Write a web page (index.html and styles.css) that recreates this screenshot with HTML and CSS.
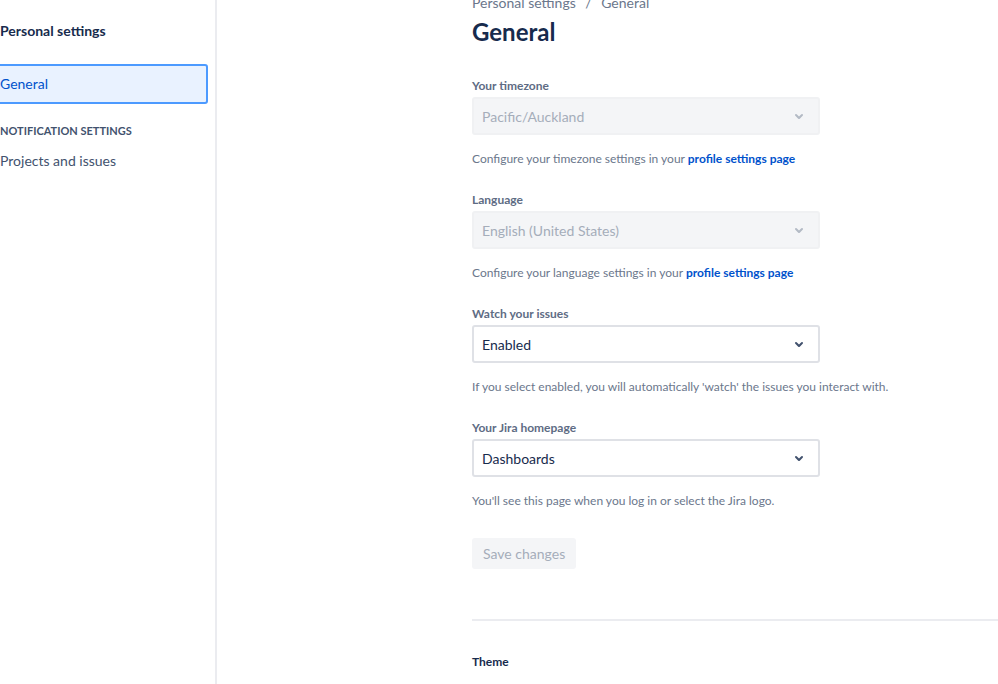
FILE: index.html
```html
<!DOCTYPE html>
<html lang="en">
<head>
  <meta charset="UTF-8">
  <meta name="viewport" content="width=device-width, initial-scale=1.0">
  <title>Personal settings - General</title>
  <link rel="stylesheet" href="styles.css">
</head>
<body>
  <div class="layout">
    <nav class="sidebar">
      <div class="sidebar-title">Personal settings</div>
      <a class="nav-item active" href="#">General</a>
      <div class="nav-heading">NOTIFICATION SETTINGS</div>
      <a class="nav-item" href="#">Projects and issues</a>
    </nav>

    <main class="main">
      <div class="breadcrumbs">Personal settings <span class="sep">/</span> General</div>
      <h1 class="page-title">General</h1>

      <div class="field">
        <label class="field-label">Your timezone</label>
        <div class="select disabled">
          <span>Pacific/Auckland</span>
          <svg class="chevron" width="24" height="24" viewBox="0 0 24 24"><path d="M8.292 10.293a1.009 1.009 0 000 1.419l2.939 2.965c.218.215.5.322.779.322s.556-.107.769-.322l2.93-2.955a1.01 1.01 0 000-1.419.987.987 0 00-1.406 0l-2.298 2.317-2.307-2.327a.99.99 0 00-1.406 0z" fill="currentColor"/></svg>
        </div>
        <div class="helper">Configure your timezone settings in your <a href="#">profile settings page</a></div>
      </div>

      <div class="field">
        <label class="field-label">Language</label>
        <div class="select disabled">
          <span>English (United States)</span>
          <svg class="chevron" width="24" height="24" viewBox="0 0 24 24"><path d="M8.292 10.293a1.009 1.009 0 000 1.419l2.939 2.965c.218.215.5.322.779.322s.556-.107.769-.322l2.93-2.955a1.01 1.01 0 000-1.419.987.987 0 00-1.406 0l-2.298 2.317-2.307-2.327a.99.99 0 00-1.406 0z" fill="currentColor"/></svg>
        </div>
        <div class="helper">Configure your language settings in your <a href="#">profile settings page</a></div>
      </div>

      <div class="field">
        <label class="field-label">Watch your issues</label>
        <div class="select">
          <span>Enabled</span>
          <svg class="chevron" width="24" height="24" viewBox="0 0 24 24"><path d="M8.292 10.293a1.009 1.009 0 000 1.419l2.939 2.965c.218.215.5.322.779.322s.556-.107.769-.322l2.93-2.955a1.01 1.01 0 000-1.419.987.987 0 00-1.406 0l-2.298 2.317-2.307-2.327a.99.99 0 00-1.406 0z" fill="currentColor"/></svg>
        </div>
        <div class="helper">If you select enabled, you will automatically 'watch' the issues you interact with.</div>
      </div>

      <div class="field">
        <label class="field-label">Your Jira homepage</label>
        <div class="select">
          <span>Dashboards</span>
          <svg class="chevron" width="24" height="24" viewBox="0 0 24 24"><path d="M8.292 10.293a1.009 1.009 0 000 1.419l2.939 2.965c.218.215.5.322.779.322s.556-.107.769-.322l2.93-2.955a1.01 1.01 0 000-1.419.987.987 0 00-1.406 0l-2.298 2.317-2.307-2.327a.99.99 0 00-1.406 0z" fill="currentColor"/></svg>
        </div>
        <div class="helper">You'll see this page when you log in or select the Jira logo.</div>
      </div>

      <button class="save-btn" disabled>Save changes</button>

      <hr class="divider">

      <div class="section-title">Theme</div>
    </main>
  </div>
</body>
</html>
```

FILE: styles.css
```css
body {
  margin: 0;
  padding: 0;
  font-family: Lato, "Noto Sans", sans-serif;
  color: #172b4d;
  background: #fff;
  overflow: hidden;
}

.layout {
  display: flex;
  height: 684px;
}

.sidebar {
  width: 215px;
  flex-shrink: 0;
  border-right: 2px solid #ebecf0;
  padding-top: 21px;
}

.sidebar-title {
  font-size: 14px;
  font-weight: 700;
  line-height: 20px;
  color: #172b4d;
  margin-bottom: 23px;
}

.nav-item {
  display: block;
  font-size: 14px;
  line-height: 20px;
  color: #42526e;
  text-decoration: none;
  padding: 8px 8px;
  margin-left: -10px;
  width: 198px;
  border: 2px solid transparent;
  border-radius: 3px;
}

.nav-item.active {
  background: #e9f2ff;
  border-color: #4c9aff;
  color: #0052cc;
}

.nav-heading {
  font-size: 11px;
  font-weight: 700;
  line-height: 16px;
  color: #42526e;
  margin-top: 19px;
  margin-bottom: 2px;
}

.main {
  flex: 1;
  padding-left: 255px;
  margin-top: -7px;
}

.breadcrumbs {
  font-size: 14px;
  line-height: 20px;
  color: #6b778c;
}

.breadcrumbs .sep {
  margin: 0 6px;
}

.page-title {
  font-size: 24px;
  font-weight: 700;
  line-height: 28px;
  margin: 5px 0 0;
  color: #172b4d;
}

.field {
  width: 348px;
  margin-top: 25px;
}

.page-title + .field {
  margin-top: 32px;
}

.field-label {
  display: block;
  font-size: 12px;
  font-weight: 700;
  line-height: 16px;
  color: #5e6c84;
  margin-bottom: 3px;
}

.select {
  display: flex;
  align-items: center;
  justify-content: space-between;
  height: 38px;
  box-sizing: border-box;
  padding: 0 7px 0 8px;
  border: 2px solid #dfe1e6;
  border-radius: 3px;
  background: #fff;
  font-size: 14px;
  color: #172b4d;
}

.select.disabled {
  background: #f4f5f7;
  border-color: #f0f1f3;
  color: #a5adba;
}

.chevron {
  color: #42526e;
}

.select.disabled .chevron {
  color: #b3bac5;
}

.helper {
  font-size: 12px;
  line-height: 16px;
  color: #6b778c;
  margin-top: 16px;
  white-space: nowrap;
}

.helper a {
  color: #0052cc;
  font-weight: 700;
  text-decoration: none;
}

.save-btn {
  display: block;
  margin-top: 29px;
  height: 31px;
  padding: 0 11px;
  border: none;
  border-radius: 3px;
  background: #f4f5f7;
  color: #a5adba;
  font-family: inherit;
  font-size: 14px;
}

.divider {
  border: none;
  height: 2px;
  background: #ebecf0;
  margin: 50px 0 0;
}

.section-title {
  font-size: 12px;
  font-weight: 700;
  line-height: 16px;
  margin-top: 33px;
  color: #172b4d;
}
```
